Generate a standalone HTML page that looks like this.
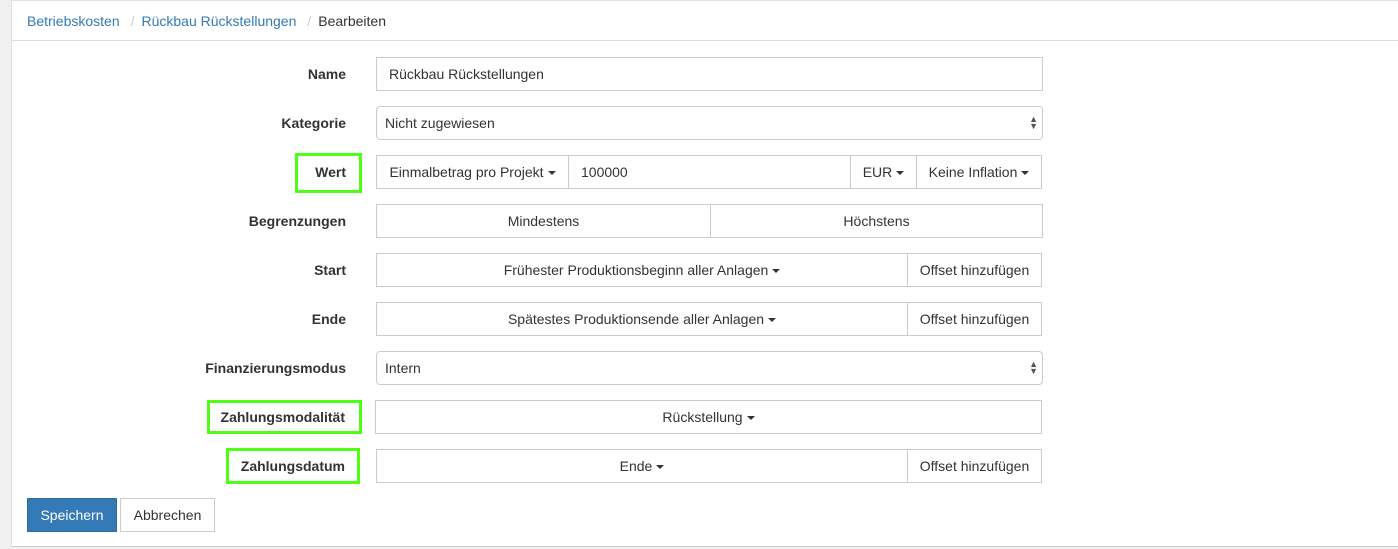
<!DOCTYPE html>
<html><head><meta charset="utf-8"><style>
*{box-sizing:border-box}
body{margin:0;width:1398px;height:549px;background:#f0f0f0;font-family:"Liberation Sans",Arial,sans-serif;font-size:14px;color:#333;position:relative;overflow:hidden}
.panel{position:absolute;left:11px;top:0;width:1387px;height:547px;background:#fff;border-top:1px solid #e2e2e2;border-left:1px solid #e2e2e2;border-bottom:1px solid #ccc}
.bc{position:absolute;left:27px;top:13px;font-size:14px}
.bc a{color:#337ab7}
.bc .s{color:#ccc;padding:0 7px 0 11px}
.hr{position:absolute;left:12px;top:40px;width:1386px;height:1px;background:#ddd}
.lbl{position:absolute;font-weight:bold;text-align:right;right:1052px;line-height:34px;height:34px}
.box{position:absolute;border:1px solid #ccc;height:34px;line-height:32px;background:#fff;white-space:nowrap}
.c{text-align:center}
.l{padding-left:8px}
.car{display:inline-block;width:0;height:0;border-left:4px solid transparent;border-right:4px solid transparent;border-top:4px solid #333;vertical-align:middle;margin-left:4px}
.sel{border-radius:4px}
.arr{position:absolute;right:4px;top:9px;font-size:9px;line-height:7px;color:#555}
.g{position:absolute;border:3px solid #4cff14}
</style></head><body>
<div class="panel"></div>
<div class="bc"><a>Betriebskosten</a><span class="s">/</span><a>Rückbau Rückstellungen</a><span class="s">/</span>Bearbeiten</div>
<div class="hr"></div>

<div class="lbl" style="top:57px">Name</div>
<div class="box l" style="left:376px;top:57px;width:667px;padding-left:12px">Rückbau Rückstellungen</div>

<div class="lbl" style="top:106px">Kategorie</div>
<div class="box l sel" style="left:376px;top:106px;width:667px">Nicht zugewiesen<div class="arr">▲<br>▼</div></div>

<div class="g" style="left:295px;top:153px;width:67px;height:40px"></div>
<div class="lbl" style="top:155px">Wert</div>
<div class="box c" style="left:376px;top:155px;width:193px">Einmalbetrag pro Projekt<span class="car"></span></div>
<div class="box l" style="left:568px;top:155px;width:283px;padding-left:12px">100000</div>
<div class="box c" style="left:850px;top:155px;width:67px">EUR<span class="car"></span></div>
<div class="box c" style="left:916px;top:155px;width:126px">Keine Inflation<span class="car"></span></div>

<div class="lbl" style="top:204px">Begrenzungen</div>
<div class="box c" style="left:376px;top:204px;width:335px">Mindestens</div>
<div class="box c" style="left:710px;top:204px;width:333px">Höchstens</div>

<div class="lbl" style="top:253px">Start</div>
<div class="box c" style="left:376px;top:253px;width:532px">Frühester Produktionsbeginn aller Anlagen<span class="car"></span></div>
<div class="box c" style="left:907px;top:253px;width:135px">Offset hinzufügen</div>

<div class="lbl" style="top:302px">Ende</div>
<div class="box c" style="left:376px;top:302px;width:532px">Spätestes Produktionsende aller Anlagen<span class="car"></span></div>
<div class="box c" style="left:907px;top:302px;width:135px">Offset hinzufügen</div>

<div class="lbl" style="top:351px">Finanzierungsmodus</div>
<div class="box l sel" style="left:376px;top:351px;width:667px">Intern<div class="arr">▲<br>▼</div></div>

<div class="g" style="left:207px;top:400px;width:155px;height:34px"></div>
<div class="lbl" style="top:400px;right:1053px">Zahlungsmodalität</div>
<div class="box c" style="left:375px;top:400px;width:667px">Rückstellung<span class="car"></span></div>

<div class="g" style="left:226px;top:448px;width:134px;height:36px"></div>
<div class="lbl" style="top:449px;right:1053px">Zahlungsdatum</div>
<div class="box c" style="left:376px;top:449px;width:532px">Ende<span class="car"></span></div>
<div class="box c" style="left:907px;top:449px;width:135px">Offset hinzufügen</div>

<div class="box c" style="left:27px;top:498px;width:90px;background:#337ab7;border-color:#2e6da4;color:#fff">Speichern</div>
<div class="box c" style="left:120px;top:498px;width:95px">Abbrechen</div>
</body></html>
